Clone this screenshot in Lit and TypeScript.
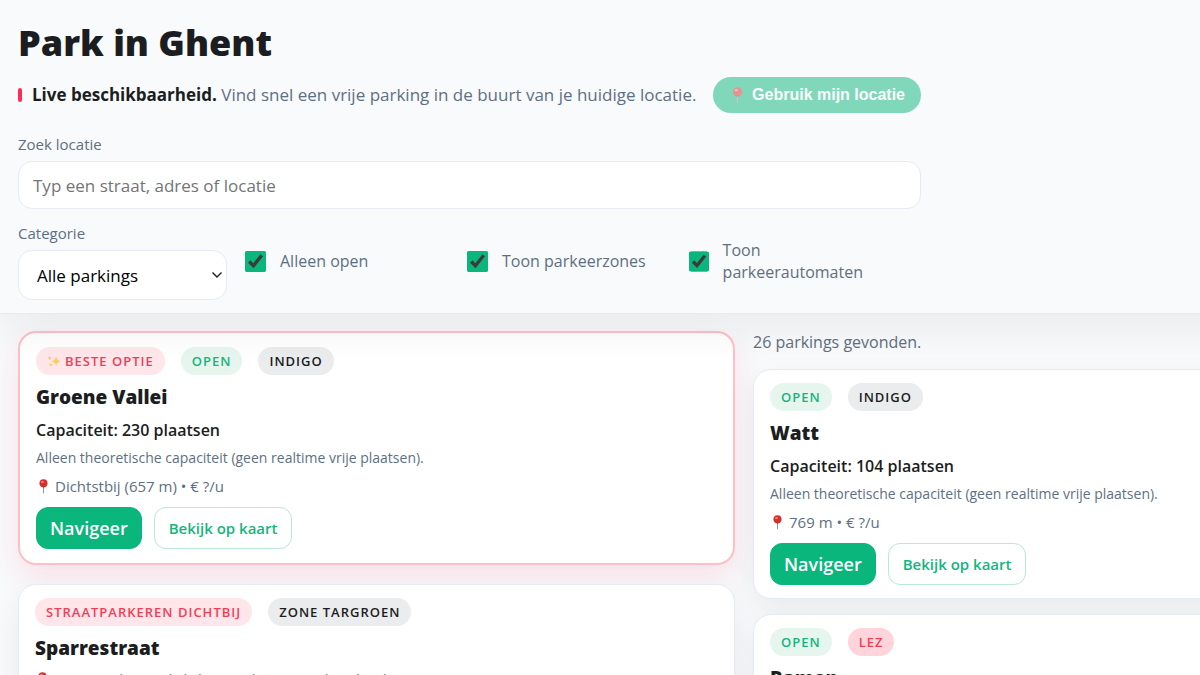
import { LitElement, html, svg, css, nothing } from "lit";
import { customElement, property } from "lit/decorators.js";

type Tone = "best" | "open" | "plain" | "lez";

interface Chip {
  tone: Tone;
  text: string;
  sparkle?: boolean;
}

interface Parking {
  name: string;
  chips: Chip[];
  capacity?: string;
  note?: string;
  place: string;
  best?: boolean;
}

const NOTE = "Alleen theoretische capaciteit (geen realtime vrije plaatsen).";

const NEAREST: Parking[] = [
  {
    name: "Groene Vallei",
    best: true,
    chips: [
      { tone: "best", text: "BESTE OPTIE", sparkle: true },
      { tone: "open", text: "OPEN" },
      { tone: "plain", text: "INDIGO" },
    ],
    capacity: "Capaciteit: 230 plaatsen",
    note: NOTE,
    place: "Dichtstbij (657 m) • € ?/u",
  },
  {
    name: "Sparrestraat",
    chips: [
      { tone: "best", text: "STRAATPARKEREN DICHTBIJ" },
      { tone: "plain", text: "ZONE TARGROEN" },
    ],
    place: "Straatparkeren dichtbij • parkeerzone (betalend)",
  },
];

const FOUND: Parking[] = [
  {
    name: "Watt",
    chips: [
      { tone: "open", text: "OPEN" },
      { tone: "plain", text: "INDIGO" },
    ],
    capacity: "Capaciteit: 104 plaatsen",
    note: NOTE,
    place: "769 m • € ?/u",
  },
  {
    name: "Ramen",
    chips: [
      { tone: "open", text: "OPEN" },
      { tone: "lez", text: "LEZ" },
    ],
    capacity: "Capaciteit: 266 plaatsen",
    note: NOTE,
    place: "1,1 km • € ?/u",
  },
];

const pin = html`<svg class="pin" viewBox="0 0 16 16" aria-hidden="true">
  ${svg`
    <path d="M7.4 7h1.3l-.2 7.600-.5 1-.5-1z" fill="#8f9399" />
    <circle cx="8" cy="4.600" r="4.300" fill="#d92f2b" />
    <path d="M4.400 7a4.300 4.300 0 0 0 7.200 0 5 5 0 0 1-7.200 0z" fill="#a51d1d" />
    <ellipse cx="6.900" cy="3.100" rx="1.500" ry="1" fill="#f58f86" />`}
</svg>`;

const sparkles = html`<svg class="sparkles" viewBox="0 0 16 16" aria-hidden="true">
  ${svg`
    <path d="M10.400 2.200Q11 7.400 15.600 8.300 11 9.200 10.400 14.400 9.800 9.200 5.200 8.300 9.800 7.400 10.400 2.200z" fill="#fdd05a" />
    <path d="M3 2Q3.300 4.200 5.200 4.600 3.300 5 3 7.200 2.700 5 .8 4.600 2.700 4.200 3 2z" fill="#fdc07a" />
    <path d="M4.400 9.600Q4.700 11.800 6.600 12.200 4.700 12.600 4.400 14.800 4.100 12.600 2.200 12.200 4.100 11.800 4.400 9.600z" fill="#fdd05a" />`}
</svg>`;

const chevron = html`<svg class="chevron" viewBox="0 0 12 8" aria-hidden="true">
  ${svg`<path d="M1.500 1.500 6 6l4.500-4.500" fill="none" stroke="#1b1d21" stroke-width="1.400" />`}
</svg>`;

@customElement("parking-card")
export class ParkingCard extends LitElement {
  @property({ attribute: false }) parking!: Parking;

  static styles = css`
    :host {
      display: block;
    }
    .card {
      background: #fff;
      border: 1px solid #e4ebf5;
      border-radius: 18px;
      padding: 13px 16px;
      box-shadow: 0 12px 30px rgba(27, 29, 33, 0.07);
    }
    .card.best {
      padding: 14px 16px;
      border: 2px solid #ffbfc8;
      box-shadow: 0 12px 30px rgba(255, 45, 85, 0.12);
    }
    .chips {
      display: flex;
      flex-wrap: wrap;
      gap: 16px;
    }
    .chip {
      display: flex;
      align-items: center;
      gap: 4px;
      padding: 0 11px;
      border-radius: 14px;
      font-size: 13px;
      line-height: 28px;
      font-weight: 600;
      letter-spacing: 1px;
    }
    .chip.best {
      background: #ffe6ea;
      color: #ef3f58;
    }
    .chip.open {
      background: #e6f6ef;
      color: #14b57d;
    }
    .chip.plain {
      background: #ebecee;
      color: #1b1d21;
    }
    .chip.lez {
      background: #ffd5db;
      color: #ef3f58;
    }
    .name {
      margin: 8px 0 0;
      font-size: 19px;
      line-height: 28px;
      font-weight: 800;
      color: #1b1d21;
    }
    .capacity {
      margin: 8px 0 0;
      font-size: 16px;
      line-height: 22px;
      font-weight: 600;
      color: #1b1d21;
    }
    .note {
      margin: 6px 0 0;
      font-size: 14px;
      line-height: 22px;
    }
    .place {
      display: flex;
      align-items: center;
      gap: 4px;
      margin: 6px 0 0;
      font-size: 15px;
      line-height: 22px;
    }
    .pin {
      width: 15px;
      height: 15px;
    }
    .sparkles {
      width: 14px;
      height: 14px;
    }
    .actions {
      display: flex;
      gap: 12px;
      margin-top: 10px;
    }
    .action {
      box-sizing: border-box;
      height: 42px;
      padding: 0 13px;
      border: 1px solid #0ab67b;
      border-radius: 12px;
      font-family: inherit;
      font-weight: 600;
      background: #0ab67b;
      color: #fff;
      font-size: 18px;
    }
    .action.ghost {
      padding: 0 14px;
      border-color: #b9e8d5;
      background: #fff;
      color: #14b57d;
      font-size: 15px;
    }
  `;

  render() {
    const p = this.parking;
    return html`<article class="card ${p.best ? "best" : ""}">
      <div class="chips">
        ${p.chips.map(
          (c) => html`<span class="chip ${c.tone}">${c.sparkle ? sparkles : nothing}${c.text}</span>`
        )}
      </div>
      <h2 class="name">${p.name}</h2>
      ${p.capacity ? html`<p class="capacity">${p.capacity}</p>` : nothing}
      ${p.note ? html`<p class="note">${p.note}</p>` : nothing}
      <p class="place">${pin}<span>${p.place}</span></p>
      <div class="actions">
        <button class="action" type="button">Navigeer</button>
        <button class="action ghost" type="button">Bekijk op kaart</button>
      </div>
    </article>`;
  }
}

@customElement("app-root")
export class AppRoot extends LitElement {
  static styles = css`
    :host {
      display: block;
      height: 100vh;
      overflow: hidden;
      background: #f8fafc;
      color: #5f6f82;
      font-family: "Open Sans", "Noto Sans", sans-serif;
    }
    .page {
      width: 124%;
    }
    .header {
      position: relative;
      z-index: 1;
      box-sizing: border-box;
      padding: 18px 18px 13px;
      background: #f8fafc;
      border-bottom: 1px solid #e4ebf5;
      box-shadow: 0 14px 40px rgba(27, 29, 33, 0.07);
    }
    .inner {
      max-width: 903px;
    }
    .title {
      margin: 0;
      font-size: 36px;
      line-height: 50px;
      font-weight: 800;
      color: #1b1d21;
    }
    .lead {
      display: flex;
      align-items: center;
      justify-content: space-between;
      margin-top: 9px;
    }
    .intro {
      display: flex;
      align-items: center;
      gap: 10px;
      margin: 0;
      font-size: 17px;
      line-height: 24px;
      white-space: nowrap;
    }
    .bar {
      width: 4px;
      height: 14px;
      border-radius: 2px;
      background: #ff2d55;
    }
    .strong {
      font-weight: 700;
      color: #1b1d21;
    }
    .locate {
      display: flex;
      align-items: center;
      gap: 6px;
      height: 36px;
      padding: 0 16px;
      border: 0;
      border-radius: 18px;
      background: #0ab67b;
      color: #fff;
      font: 700 16px "Liberation Sans", Arial, sans-serif;
      white-space: nowrap;
      opacity: 0.5;
    }
    .pin {
      width: 17px;
      height: 17px;
    }
    .label {
      display: block;
      font-size: 15px;
      line-height: 22px;
    }
    .search {
      display: block;
      box-sizing: border-box;
      width: 100%;
      height: 48px;
      margin-top: 6px;
      padding: 0 14px;
      border: 1px solid #e4ebf5;
      border-radius: 14px;
      background: #fff;
      font-family: inherit;
      font-size: 17px;
      color: #000;
    }
    .search-field {
      margin-top: 20px;
    }
    .filters {
      display: grid;
      grid-template-columns: repeat(4, minmax(0, 1fr));
      align-items: center;
      gap: 13px;
      margin-top: 13px;
      padding-right: 28px;
    }
    .select-wrap {
      position: relative;
    }
    .select {
      appearance: none;
      display: block;
      box-sizing: border-box;
      width: 100%;
      height: 50px;
      margin-top: 6px;
      padding: 0 18px;
      border: 1px solid #e4ebf5;
      border-radius: 14px;
      background: #fff;
      color: #000;
      font-family: inherit;
      font-size: 17px;
    }
    .chevron {
      position: absolute;
      right: 4px;
      top: 21px;
      width: 12px;
      height: 8px;
      pointer-events: none;
    }
    .check {
      display: flex;
      align-items: center;
      gap: 14px;
      padding-left: 5px;
      font-size: 16px;
      line-height: 22px;
    }
    .box {
      width: 21px;
      height: 21px;
      margin: 0;
      accent-color: #0ab67b;
    }
    .results {
      display: grid;
      grid-template-columns: repeat(2, minmax(0, 1fr));
      align-items: start;
      gap: 18px;
      padding: 17px 18px;
    }
    .column {
      display: grid;
      gap: 19px;
    }
    .list {
      display: grid;
      gap: 15px;
    }
    .count {
      margin: 0;
      font-size: 16px;
      line-height: 23px;
    }
  `;

  render() {
    return html`<div class="page">
      <header class="header">
        <div class="inner">
          <h1 class="title">Park in Ghent</h1>
          <div class="lead">
            <p class="intro">
              <span class="bar"></span>
              <span><strong class="strong">Live beschikbaarheid.</strong> Vind snel een vrije parking in de buurt van je huidige locatie.</span>
            </p>
            <button class="locate" type="button">${pin}<span>Gebruik mijn locatie</span></button>
          </div>
          <div class="search-field">
            <label class="label" for="search">Zoek locatie</label>
            <input class="search" id="search" type="text" placeholder="Typ een straat, adres of locatie" />
          </div>
          <div class="filters">
            <div>
              <label class="label" for="category">Categorie</label>
              <div class="select-wrap">
                <select class="select" id="category">
                  <option>Alle parkings</option>
                </select>
                ${chevron}
              </div>
            </div>
            ${["Alleen open", "Toon parkeerzones", "Toon parkeerautomaten"].map(
              (text) => html`<label class="check"><input class="box" type="checkbox" checked /><span>${text}</span></label>`
            )}
          </div>
        </div>
      </header>
      <main class="results">
        <section class="column">
          ${NEAREST.map((p) => html`<parking-card .parking=${p}></parking-card>`)}
        </section>
        <section class="list">
          <p class="count">26 parkings gevonden.</p>
          ${FOUND.map((p) => html`<parking-card .parking=${p}></parking-card>`)}
        </section>
      </main>
    </div>`;
  }
}
